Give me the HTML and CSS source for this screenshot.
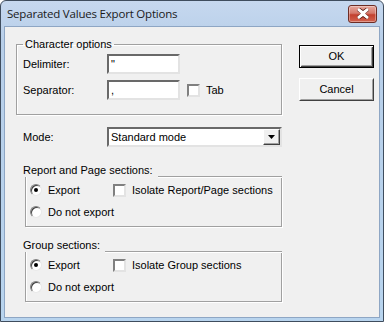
FILE: index.html
```html
<!DOCTYPE html>
<html>
<head>
<meta charset="utf-8">
<link rel="stylesheet" href="styles.css">
</head>
<body>
<div class="window">
  <div class="titlebar">
    <span class="title">Separated Values Export Options</span>
    <span class="close">
      <svg width="16" height="11" viewBox="0 0 16 11">
        <path d="M3 1 L8 4.5 L13 1 M3 10 L8 6.5 L13 10" fill="none" stroke="#5a1f18" stroke-width="4"/>
        <path d="M3 1 L8 4.5 L13 1 M3 10 L8 6.5 L13 10" fill="none" stroke="#fff" stroke-width="2.2"/>
        <path d="M3.2 1.2 L12.8 9.8 M12.8 1.2 L3.2 9.8" stroke="#fff" stroke-width="2.6"/>
      </svg>
    </span>
  </div>
  <div class="client">
    <div class="main">
      <fieldset class="charopts">
        <legend>Character options</legend>
        <div class="row">
          <span class="lbl">Delimiter:</span>
          <span class="edit">"</span>
        </div>
        <div class="row">
          <span class="lbl">Separator:</span>
          <span class="edit">,</span>
          <span class="check tabcheck"></span>
          <span class="ctext">Tab</span>
        </div>
      </fieldset>

      <div class="row moderow">
        <span class="lbl">Mode:</span>
        <span class="combo">
          <span class="combotext">Standard mode</span>
          <span class="drop"><svg width="7" height="4" viewBox="0 0 7 4"><path d="M0 0 H7 L3.5 4 Z" fill="#000"/></svg></span>
        </span>
      </div>

      <div class="group first">
        <div class="ghead"><span>Report and Page sections:</span><span class="gline"></span></div>
        <div class="gbox">
          <div class="grow">
            <span class="opt"><span class="radio on"></span><span class="rtext">Export</span></span>
            <span class="check"></span><span class="ctext">Isolate Report/Page sections</span>
          </div>
          <div class="grow">
            <span class="opt"><span class="radio"></span><span class="rtext">Do not export</span></span>
          </div>
        </div>
      </div>

      <div class="group">
        <div class="ghead"><span>Group sections:</span><span class="gline"></span></div>
        <div class="gbox">
          <div class="grow">
            <span class="opt"><span class="radio on"></span><span class="rtext">Export</span></span>
            <span class="check"></span><span class="ctext">Isolate Group sections</span>
          </div>
          <div class="grow">
            <span class="opt"><span class="radio"></span><span class="rtext">Do not export</span></span>
          </div>
        </div>
      </div>
    </div>
    <div class="buttons">
      <span class="btn default"><span class="btninner">OK</span></span>
      <span class="btn"><span class="btninner">Cancel</span></span>
    </div>
  </div>
</div>
</body>
</html>
```

FILE: styles.css
```css
* { box-sizing: border-box; }
html, body { margin: 0; padding: 0; }
body {
  width: 384px;
  height: 322px;
  overflow: hidden;
  font-family: "Liberation Sans", Arial, sans-serif;
  font-size: 11px;
  line-height: 13px;
  color: #000;
  background: #fff;
}
.window {
  width: 384px;
  height: 322px;
  border: 1px solid #3f4d5e;
  border-radius: 6px 6px 0 0;
  background: linear-gradient(#c6d8ef, #b8cfe9 40px, #b8d4ee);
  padding: 0 3px 3px 3px;
  display: flex;
  flex-direction: column;
}
.titlebar {
  height: 25px;
  flex: none;
  display: flex;
  align-items: center;
  justify-content: space-between;
  padding: 0 3px 2px 3px;
}
.title {
  font-family: "Open Sans", "Noto Sans", sans-serif;
  font-size: 11.5px;
  color: #1a1a1a;
  letter-spacing: -0.2px;
  margin-top: 1px;
}
.close {
  width: 29px;
  height: 18px;
  margin-top: 2px;
  border: 1px solid #6d2d25;
  border-radius: 3px;
  background: linear-gradient(#e6a79d, #d5796b 45%, #c3412f 55%, #d2634f);
  box-shadow: inset 0 0 0 1px rgba(255,255,255,0.35);
  display: flex;
  align-items: center;
  justify-content: center;
}
.client {
  flex: 1;
  background: #f0f0f0;
  border: 1px solid #8ea6c4;
  display: flex;
  padding: 11px 0 0 11px;
  white-space: nowrap;
}
.main {
  width: 266px;
  flex: none;
  display: flex;
  flex-direction: column;
}
.charopts {
  margin: 0;
  min-inline-size: 0;
  padding: 3px 6px 14px 6px;
  border: 1px solid #a0a0a0;
  box-shadow: 1px 1px 0 #fff, inset 1px 1px 0 #fff;
  display: flex;
  flex-direction: column;
  gap: 6px;
}
.charopts legend {
  padding: 0 2px;
  margin-left: 0;
  line-height: 13px;
}
.row {
  display: flex;
  align-items: center;
}
.lbl {
  width: 84px;
  flex: none;
}
.edit {
  width: 73px;
  height: 20px;
  flex: none;
  background: #fff;
  border-style: solid;
  border-width: 2px;
  border-color: #696969 #e3e3e3 #e3e3e3 #696969;
  padding: 2px 0 0 2px;
  line-height: 13px;
}
.check {
  width: 13px;
  height: 13px;
  flex: none;
  background: #fff;
  border-style: solid;
  border-width: 2px;
  border-color: #808080 #e3e3e3 #e3e3e3 #808080;
}
.tabcheck { margin-left: 7px; }
.ctext { margin-left: 6px; }
.moderow { margin-top: 12px; padding-left: 7px; }
.combo {
  width: 175px;
  height: 20px;
  flex: none;
  background: #fff;
  border-style: solid;
  border-width: 2px;
  border-color: #696969 #e3e3e3 #e3e3e3 #696969;
  display: flex;
  align-items: center;
  justify-content: space-between;
}
.combotext { padding-left: 2px; }
.drop {
  width: 17px;
  height: 16px;
  background: #f0f0f0;
  border-style: solid;
  border-width: 1px;
  border-color: #fff #404040 #404040 #fff;
  box-shadow: inset -1px -1px 0 #a0a0a0;
  display: flex;
  align-items: center;
  justify-content: center;
}
.group { margin-top: 17px; padding-left: 7px; }
.group + .group { margin-top: 12px; }
.ghead {
  display: flex;
  align-items: flex-end;
  height: 13px;
}
.gline {
  flex: 1;
  height: 1px;
  background: #a0a0a0;
  margin-left: 5px;
  box-shadow: 0 1px 0 #fff;
}
.gbox {
  margin-left: 2px;
  border: 1px solid #a0a0a0;
  border-top: none;
  box-shadow: 1px 1px 0 #fff, inset 1px 0 0 #fff;
  padding: 2px 0 3px 4px;
}
.grow {
  height: 22px;
  display: flex;
  align-items: center;
}
.opt {
  width: 83px;
  flex: none;
  display: flex;
  align-items: center;
}
.radio {
  width: 12px;
  height: 12px;
  border-radius: 50%;
  background: #fff;
  border: 1px solid;
  border-color: #808080 #e8e8e8 #e8e8e8 #808080;
  box-shadow: inset 1px 1px 0 #404040;
  margin-right: 6px;
  flex: none;
  position: relative;
}
.radio.on::after {
  content: "";
  position: absolute;
  left: 3px;
  top: 3px;
  width: 4px;
  height: 4px;
  border-radius: 50%;
  background: #000;
}
.buttons {
  margin-left: 17px;
  margin-top: 7px;
  display: flex;
  flex-direction: column;
  gap: 10px;
}
.btn {
  width: 75px;
  height: 23px;
  display: flex;
  border-style: solid;
  border-width: 1px;
  border-color: #fff #404040 #404040 #fff;
  background: #f0f0f0;
}
.btninner {
  flex: 1;
  display: flex;
  align-items: center;
  justify-content: center;
  border-style: solid;
  border-width: 1px;
  border-color: #f0f0f0 #a0a0a0 #a0a0a0 #f0f0f0;
}
.btn.default {
  border: 1px solid #000;
  box-shadow: inset 1px 1px 0 #fff, inset -1px -1px 0 #404040;
}
.btn.default .btninner {
  margin: 1px;
  border-color: #f0f0f0 #a0a0a0 #a0a0a0 #f0f0f0;
}
```
